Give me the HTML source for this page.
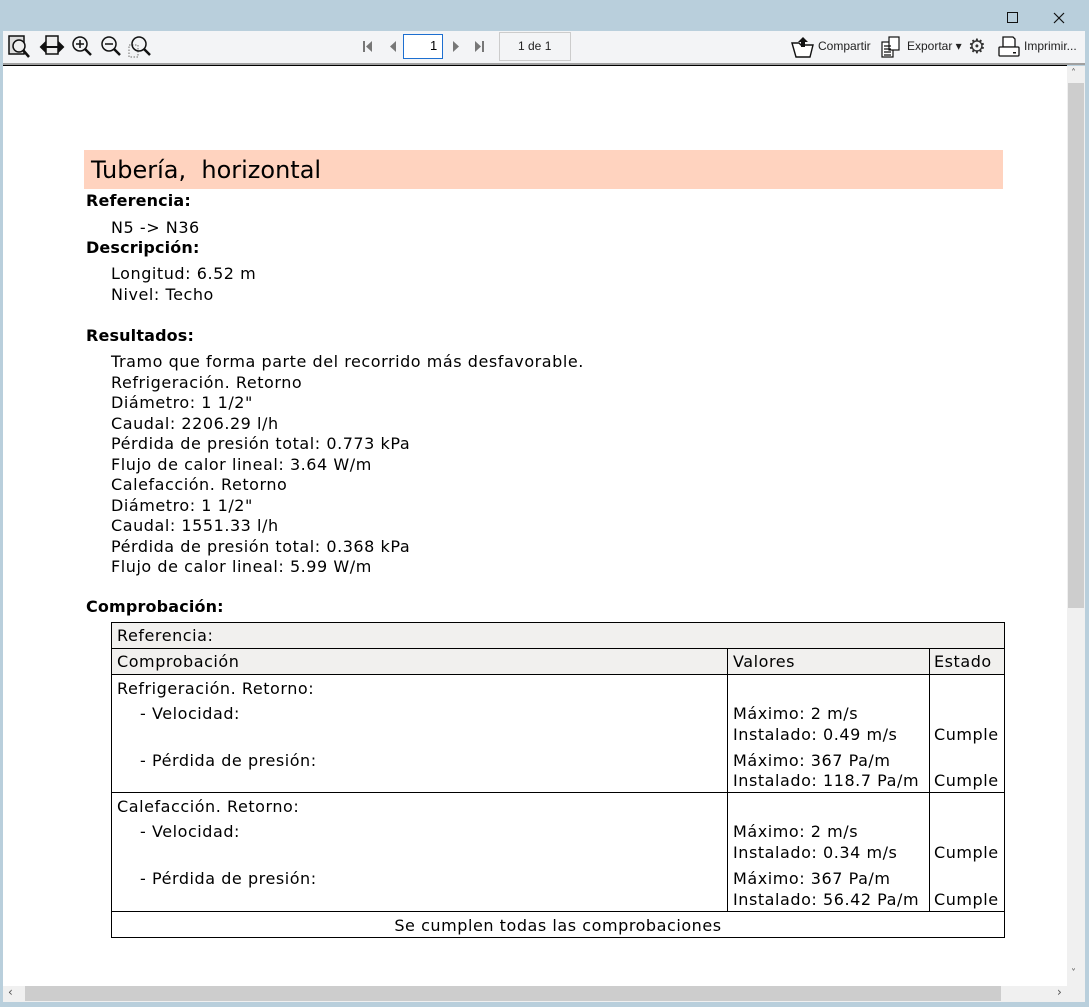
<!DOCTYPE html>
<html><head><meta charset="utf-8"><style>
*{margin:0;padding:0;box-sizing:border-box}
body{width:1089px;height:1007px;overflow:hidden;background:#b9cfdc;position:relative;font-family:"DejaVu Sans","Liberation Sans",sans-serif;color:#000}
.a{position:absolute;white-space:nowrap}
.t{font-size:16px;line-height:20px;letter-spacing:0.55px;margin-top:1px}
.b{font-weight:bold;letter-spacing:0.15px}
.ui{font-family:"Liberation Sans",sans-serif;font-size:12px;color:#222}
.ln{position:absolute;background:#000}
</style></head><body>
<!-- title bar -->
<div class="a" style="left:1007px;top:12px;width:11px;height:11px;border:1.3px solid #111"></div>
<svg class="a" style="left:1053px;top:12px" width="12" height="12" viewBox="0 0 12 12"><path d="M1 1l10 10M11 1L1 11" stroke="#111" stroke-width="1.2"/></svg>
<!-- toolbar -->
<div class="a" style="left:3px;top:31px;width:1082px;height:33px;background:#f3f4f6"></div>
<div class="a" style="left:3px;top:63px;width:1082px;height:2px;background:#a0a0a0"></div>
<div class="a" style="left:3px;top:65px;width:1064px;height:1px;background:#000"></div>
<svg class="a" style="left:8px;top:33px" width="150" height="28" viewBox="0 0 150 28">
 <g fill="none" stroke="#111" stroke-width="1.5">
  <rect x="1" y="3" width="15" height="18" fill="#ddd"/>
  <circle cx="11" cy="13" r="6" fill="#eee"/><line x1="15" y1="17" x2="21" y2="24" stroke-width="2.5"/>
  <rect x="38" y="3" width="12" height="18" fill="#eee"/>
  <path d="M33 14h22M33 14l4-4v8zM55 14l-4-4v8z" fill="#111" stroke-width="2"/>
  <circle cx="72" cy="11" r="7"/><path d="M68 11h8M72 7v8"/><line x1="77" y1="16" x2="83" y2="22" stroke-width="2.5"/>
  <circle cx="101" cy="11" r="7"/><path d="M97 11h8"/><line x1="106" y1="16" x2="112" y2="22" stroke-width="2.5"/>
  <rect x="121" y="12" width="9" height="12" stroke="#999" stroke-dasharray="1.5 1.5"/>
  <circle cx="131" cy="11" r="7"/><line x1="136" y1="16" x2="142" y2="22" stroke-width="2.5"/>
 </g></svg>
<svg class="a" style="left:360px;top:39px" width="130" height="16" viewBox="0 0 130 16">
 <g fill="#777"><rect x="3" y="2" width="2" height="11"/><path d="M12 2v11l-6-5.5z"/><path d="M36 2v11l-6-5.5z"/>
 <path d="M93 2v11l6-5.5z"/><path d="M115 2v11l6-5.5z"/><rect x="122" y="2" width="2" height="11"/></g></svg>
<div class="a" style="left:403px;top:34px;width:40px;height:25px;background:#fff;border:1px solid #1d6fd0"></div>
<div class="a" style="left:430px;top:38px;font-size:13px;font-family:'Liberation Sans'">1</div>
<div class="a" style="left:499px;top:32px;width:72px;height:29px;border:1px solid #ccc;background:#f3f4f6"></div>
<div class="a ui" style="left:518px;top:39px">1 de 1</div>
<svg class="a" style="left:790px;top:35px" width="24" height="24" viewBox="0 0 24 24"><path d="M2 8l4 14h14l3-12h-12l-2-2z" fill="#fff" stroke="#111" stroke-width="1.4"/><path d="M13 2l-5 5h3v5h4v-5h3z" fill="#111"/></svg>
<div class="a ui" style="left:818px;top:39px">Compartir</div>
<svg class="a" style="left:881px;top:35px" width="20" height="24" viewBox="0 0 20 24"><g fill="#fff" stroke="#111" stroke-width="1.2"><rect x="1" y="7" width="11" height="15"/><rect x="8" y="2" width="10" height="13"/><path d="M3 11h7M3 14h7M3 17h7M3 20h7"/></g></svg>
<div class="a ui" style="left:907px;top:39px">Exportar ▾</div>
<div class="a" style="left:968px;top:34px;font-size:20px;color:#333">⚙</div>
<svg class="a" style="left:998px;top:35px" width="22" height="24" viewBox="0 0 22 24"><g fill="#fff" stroke="#111" stroke-width="1.3"><path d="M5 2h10l2 2v8H5z"/><rect x="1" y="12" width="20" height="9" rx="1"/></g><rect x="15" y="17" width="3" height="1.5" fill="#111"/></svg>
<div class="a ui" style="left:1024px;top:39px">Imprimir...</div>
<!-- content -->
<div class="a" style="left:3px;top:66px;width:1064px;height:920px;background:#fff"></div>
<!-- scrollbars -->
<div class="a" style="left:1067px;top:66px;width:18px;height:920px;background:#f0f0f0"></div>
<div class="a" style="left:1068px;top:83px;width:16px;height:525px;background:#cdcdcd"></div>
<div class="a" style="left:1071px;top:68px;font-size:10px;color:#555">˄</div>
<div class="a" style="left:1071px;top:968px;font-size:10px;color:#555">˅</div>
<div class="a" style="left:3px;top:986px;width:1082px;height:16px;background:#f0f0f0"></div>
<div class="a" style="left:25px;top:986px;width:976px;height:15px;background:#cdcdcd"></div>
<div class="a" style="left:8px;top:985px;font-size:12px;color:#555">‹</div>
<div class="a" style="left:1057px;top:985px;font-size:12px;color:#555">›</div>
<!-- title band -->
<div class="a" style="left:84px;top:150px;width:919px;height:39px;background:#ffd3bf"></div>
<div class="a" style="left:91px;top:155px;font-size:24px;line-height:30px">Tubería,&nbsp; horizontal</div>
<div class="a t b" style="left:86px;top:190px">Referencia:</div>
<div class="a t" style="left:111px;top:217px">N5 -&gt; N36</div>
<div class="a t b" style="left:86px;top:237px">Descripción:</div>
<div class="a t" style="left:111px;top:263px">Longitud: 6.52 m</div>
<div class="a t" style="left:111px;top:284px">Nivel: Techo</div>
<div class="a t b" style="left:86px;top:325px">Resultados:</div>
<div class="a t" style="left:111px;top:351px;line-height:20.5px">Tramo que forma parte del recorrido más desfavorable.<br>Refrigeración. Retorno<br>Diámetro: 1 1/2"<br>Caudal: 2206.29 l/h<br>Pérdida de presión total: 0.773 kPa<br>Flujo de calor lineal: 3.64 W/m<br>Calefacción. Retorno<br>Diámetro: 1 1/2"<br>Caudal: 1551.33 l/h<br>Pérdida de presión total: 0.368 kPa<br>Flujo de calor lineal: 5.99 W/m</div>
<div class="a t b" style="left:86px;top:596px">Comprobación:</div>
<!-- table -->
<div class="a" style="left:111px;top:622px;width:894px;height:52px;background:#f1f0ee"></div>
<div class="ln" style="left:111px;top:622px;width:894px;height:1px"></div>
<div class="ln" style="left:111px;top:648px;width:894px;height:1px"></div>
<div class="ln" style="left:111px;top:674px;width:894px;height:1px"></div>
<div class="ln" style="left:111px;top:792px;width:894px;height:1px"></div>
<div class="ln" style="left:111px;top:911px;width:894px;height:1px"></div>
<div class="ln" style="left:111px;top:937px;width:894px;height:1px"></div>
<div class="ln" style="left:111px;top:622px;width:1px;height:316px"></div>
<div class="ln" style="left:1004px;top:622px;width:1px;height:316px"></div>
<div class="ln" style="left:727px;top:648px;width:1px;height:263px"></div>
<div class="ln" style="left:929px;top:648px;width:1px;height:263px"></div>
<div class="a t" style="left:117px;top:625px">Referencia:</div>
<div class="a t" style="left:117px;top:651px">Comprobación</div>
<div class="a t" style="left:733px;top:651px">Valores</div>
<div class="a t" style="left:934px;top:651px">Estado</div>
<div class="a t" style="left:117px;top:678px">Refrigeración. Retorno:</div>
<div class="a t" style="left:140px;top:703px">- Velocidad:</div>
<div class="a t" style="left:733px;top:703px">Máximo: 2 m/s</div>
<div class="a t" style="left:733px;top:724px">Instalado: 0.49 m/s</div>
<div class="a t" style="left:934px;top:724px">Cumple</div>
<div class="a t" style="left:140px;top:750px">- Pérdida de presión:</div>
<div class="a t" style="left:733px;top:750px">Máximo: 367 Pa/m</div>
<div class="a t" style="left:733px;top:770px">Instalado: 118.7 Pa/m</div>
<div class="a t" style="left:934px;top:770px">Cumple</div>
<div class="a t" style="left:117px;top:796px">Calefacción. Retorno:</div>
<div class="a t" style="left:140px;top:821px">- Velocidad:</div>
<div class="a t" style="left:733px;top:821px">Máximo: 2 m/s</div>
<div class="a t" style="left:733px;top:842px">Instalado: 0.34 m/s</div>
<div class="a t" style="left:934px;top:842px">Cumple</div>
<div class="a t" style="left:140px;top:868px">- Pérdida de presión:</div>
<div class="a t" style="left:733px;top:868px">Máximo: 367 Pa/m</div>
<div class="a t" style="left:733px;top:889px">Instalado: 56.42 Pa/m</div>
<div class="a t" style="left:934px;top:889px">Cumple</div>
<div class="a t" style="left:111px;top:915px;width:894px;text-align:center">Se cumplen todas las comprobaciones</div>
</body></html>
